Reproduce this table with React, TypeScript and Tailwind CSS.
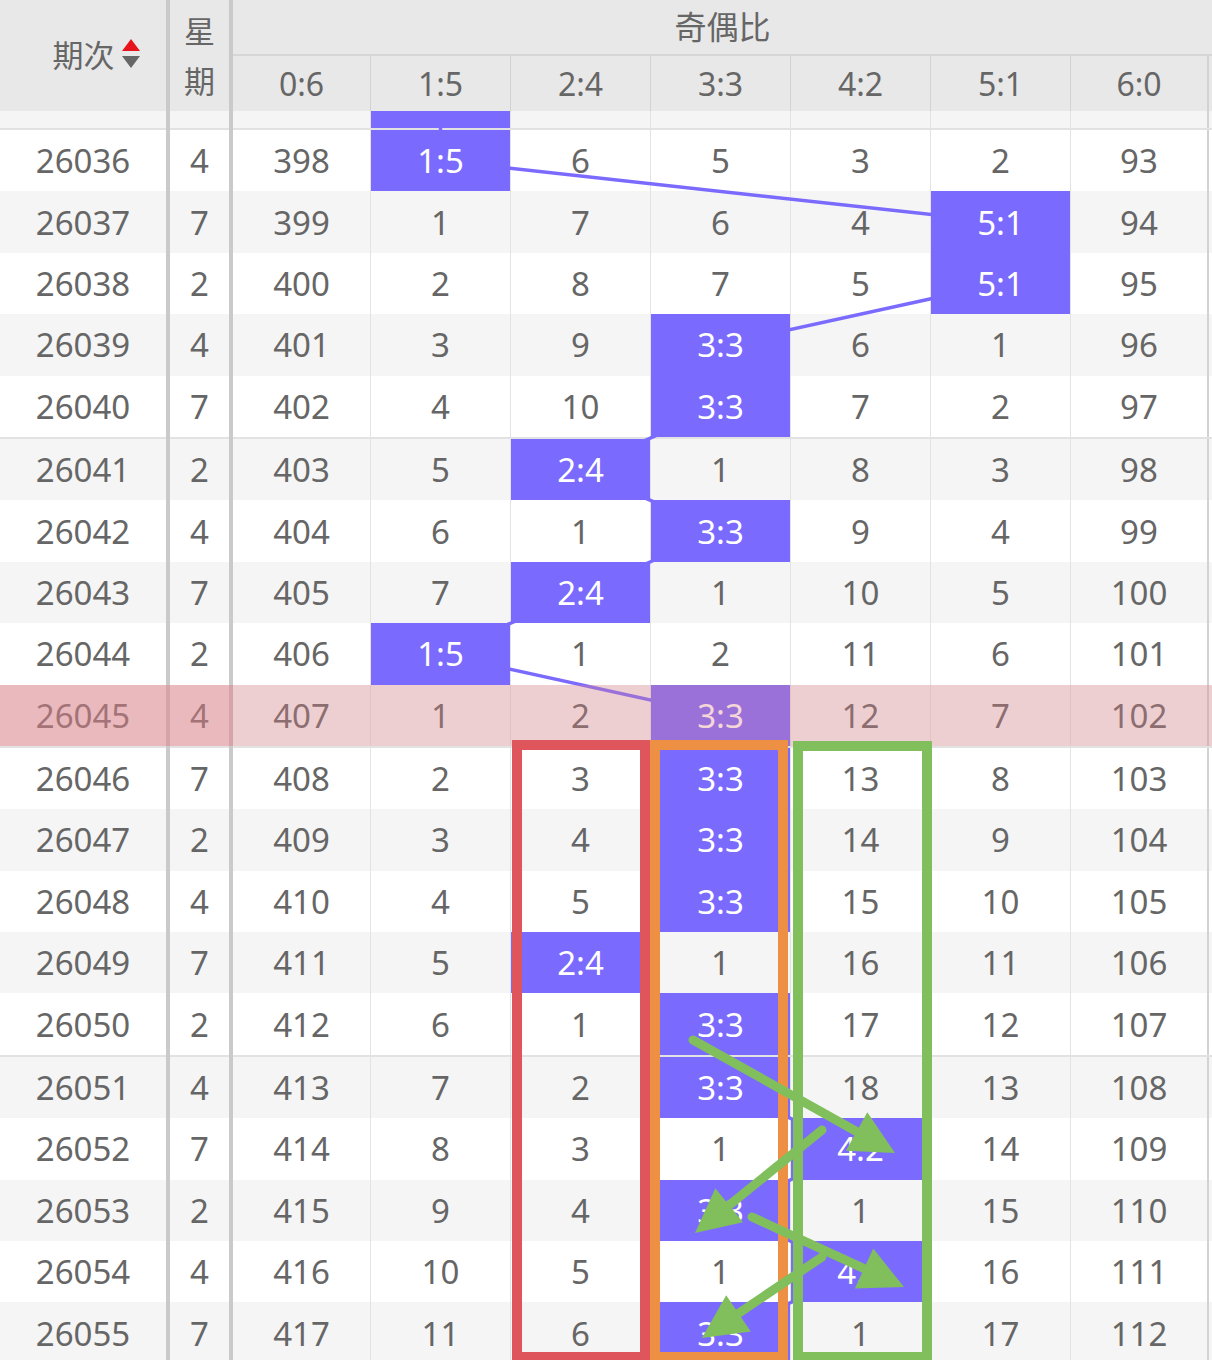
import clsx from "clsx";

const RATIOS = ["0:6", "1:5", "2:4", "3:3", "4:2", "5:1", "6:0"];
const CX = [301.5, 440.5, 580.5, 720.5, 860.5, 1000.5, 1139];

type Row = { id: number; week: number; v: (number | null)[]; hit: number };

const ROWS: Row[] = [
  { id: 26036, week: 4, v: [398, null, 6, 5, 3, 2, 93], hit: 1 },
  { id: 26037, week: 7, v: [399, 1, 7, 6, 4, null, 94], hit: 5 },
  { id: 26038, week: 2, v: [400, 2, 8, 7, 5, null, 95], hit: 5 },
  { id: 26039, week: 4, v: [401, 3, 9, null, 6, 1, 96], hit: 3 },
  { id: 26040, week: 7, v: [402, 4, 10, null, 7, 2, 97], hit: 3 },
  { id: 26041, week: 2, v: [403, 5, null, 1, 8, 3, 98], hit: 2 },
  { id: 26042, week: 4, v: [404, 6, 1, null, 9, 4, 99], hit: 3 },
  { id: 26043, week: 7, v: [405, 7, null, 1, 10, 5, 100], hit: 2 },
  { id: 26044, week: 2, v: [406, null, 1, 2, 11, 6, 101], hit: 1 },
  { id: 26045, week: 4, v: [407, 1, 2, null, 12, 7, 102], hit: 3 },
  { id: 26046, week: 7, v: [408, 2, 3, null, 13, 8, 103], hit: 3 },
  { id: 26047, week: 2, v: [409, 3, 4, null, 14, 9, 104], hit: 3 },
  { id: 26048, week: 4, v: [410, 4, 5, null, 15, 10, 105], hit: 3 },
  { id: 26049, week: 7, v: [411, 5, null, 1, 16, 11, 106], hit: 2 },
  { id: 26050, week: 2, v: [412, 6, 1, null, 17, 12, 107], hit: 3 },
  { id: 26051, week: 4, v: [413, 7, 2, null, 18, 13, 108], hit: 3 },
  { id: 26052, week: 7, v: [414, 8, 3, 1, null, 14, 109], hit: 4 },
  { id: 26053, week: 2, v: [415, 9, 4, null, 1, 15, 110], hit: 3 },
  { id: 26054, week: 4, v: [416, 10, 5, 1, null, 16, 111], hit: 4 },
  { id: 26055, week: 7, v: [417, 11, 6, null, 1, 17, 112], hit: 3 },
];

// y centre of a body row (r = -1 is the half-hidden row above)
const rowY = (r: number) =>
  r < 0 ? 97 : 128 + Math.floor(r / 5) * 309 + 2 + (r % 5) * 61.4 + 30.7;

const ARROWS = [
  [693, 1040, 895, 1153],
  [822, 1130, 695, 1233],
  [752, 1217, 904, 1287],
  [822, 1257, 702, 1338],
];

function arrow(sx: number, sy: number, tx: number, ty: number) {
  const dx = tx - sx;
  const dy = ty - sy;
  const len = Math.hypot(dx, dy);
  const ux = dx / len;
  const uy = dy / len;
  const bx = tx - ux * 44;
  const by = ty - uy * 44;
  const nx = -uy * 22;
  const ny = ux * 22;
  return {
    end: [bx + ux * 6, by + uy * 6],
    head: `${tx},${ty} ${bx + nx},${by + ny} ${bx - nx},${by - ny}`,
  };
}

function Sep() {
  return <div className="w-[4px] shrink-0 self-stretch bg-[#cacaca]" />;
}

function RatioCell({ idx, children, header }: { idx: number; children?: React.ReactNode; header?: boolean }) {
  return (
    <div
      className={clsx(
        "flex h-full shrink-0 items-center justify-center",
        idx === 0 && "w-[137px]",
        idx > 0 && idx < 6 && "w-[140px] border-l",
        idx === 6 && "w-[139px] border-l border-r-2 border-r-[#d2d2d2]",
        header ? "border-l-[#d2d2d2]" : "border-l-[#e3e3e3]"
      )}
    >
      {children}
    </div>
  );
}

function Hit({ label }: { label?: string }) {
  return (
    <div className="relative z-10 flex h-full w-full items-center justify-center bg-[#7b6afe] text-white">
      {label}
    </div>
  );
}

function GroupLine() {
  return (
    <div className="flex h-[2px]">
      <div className="w-[166px] bg-[#e2e2e2]" />
      <Sep />
      <div className="w-[59px] bg-[#e2e2e2]" />
      <Sep />
      <div className="flex-1 bg-[#e2e2e2]" />
    </div>
  );
}

function BodyRow({ row, index }: { row: Row; index: number }) {
  const pink = row.id === 26045;
  return (
    <div className={clsx("relative flex h-[61.4px]", index % 2 === 1 ? "bg-[#f5f5f5]" : "bg-white")}>
      <div className="flex w-[166px] items-center justify-center">{row.id}</div>
      <Sep />
      <div className="flex w-[59px] items-center justify-center">{row.week}</div>
      <Sep />
      {row.v.map((val, i) => (
        <RatioCell key={i} idx={i}>
          {i === row.hit ? <Hit label={RATIOS[i]} /> : val}
        </RatioCell>
      ))}
      {pink && (
        <>
          <div className="absolute inset-0 z-20 bg-[rgba(222,128,138,0.32)]" />
          <div className="absolute inset-y-0 left-0 z-20 w-[233px] bg-[rgba(222,128,138,0.28)]" />
        </>
      )}
    </div>
  );
}

export default function App() {
  const points = [
    { x: CX[1], y: rowY(-1) },
    ...ROWS.map((r, i) => ({ x: CX[r.hit], y: rowY(i) })),
  ];
  const groups = [0, 1, 2, 3].map((g) => ROWS.slice(g * 5, g * 5 + 5));

  return (
    <div className="relative h-[1360px] w-[1212px] overflow-hidden bg-white font-['Noto_Sans','Noto_Sans_CJK_SC',sans-serif] text-[33px] leading-none text-[#666]">
      {/* header */}
      <div className="relative z-20 flex h-[111px] bg-[#e8e8e8]">
        <div className="flex w-[166px] items-center justify-center pl-[26px] text-[31px]">
          <span>期次</span>
          <svg width="18" height="30" viewBox="0 0 18 30" className="ml-[7px] mt-[-4px]">
            <polygon points="9,0 18,12 0,12" fill="#e8141c" />
            <polygon points="0,17 18,17 9,29" fill="#666" />
          </svg>
        </div>
        <Sep />
        <div className="flex w-[59px] flex-col items-center justify-center text-[31px] leading-[50px]">
          <span>星</span>
          <span>期</span>
        </div>
        <Sep />
        <div className="flex flex-1 flex-col">
          <div className="flex h-[54px] items-center justify-center text-[32px]">奇偶比</div>
          <div className="h-[2px] bg-[#d6d6d6]" />
          <div className="flex h-[55px] text-[32px]">
            {RATIOS.map((r, i) => (
              <RatioCell key={r} idx={i} header>
                {r}
              </RatioCell>
            ))}
          </div>
        </div>
      </div>

      {/* body */}
      <div className="flex flex-col">
        <div className="flex h-[17px] bg-[#f5f5f5]">
          <div className="w-[166px]" />
          <Sep />
          <div className="w-[59px]" />
          <Sep />
          {RATIOS.map((r, i) => (
            <RatioCell key={r} idx={i}>
              {i === 1 && <Hit />}
            </RatioCell>
          ))}
        </div>
        {groups.map((rows, g) => (
          <div key={g}>
            <GroupLine />
            {rows.map((row, k) => (
              <BodyRow key={row.id} row={row} index={g * 5 + k} />
            ))}
          </div>
        ))}
      </div>

      {/* trend line */}
      <svg className="pointer-events-none absolute left-0 top-0" width="1212" height="1360">
        <polyline
          points={points.map((p) => `${p.x},${p.y}`).join(" ")}
          fill="none"
          stroke="#7b6afe"
          strokeWidth="3.5"
        />
      </svg>

      {/* annotations */}
      <svg className="pointer-events-none absolute left-0 top-0 z-30" width="1212" height="1360">
        <rect x="517" y="745" width="128" height="612" fill="none" stroke="#de565c" strokeWidth="10" />
        <rect x="655" y="745" width="128" height="612" fill="none" stroke="#ee9044" strokeWidth="10" />
        <rect x="798" y="746" width="129" height="611" fill="none" stroke="#80bf5c" strokeWidth="10" />
        {ARROWS.map(([sx, sy, tx, ty], i) => {
          const a = arrow(sx, sy, tx, ty);
          return (
            <g key={i}>
              <line x1={sx} y1={sy} x2={a.end[0]} y2={a.end[1]} stroke="#80bf5c" strokeWidth="9" strokeLinecap="round" />
              <polygon points={a.head} fill="#80bf5c" />
            </g>
          );
        })}
      </svg>
    </div>
  );
}
